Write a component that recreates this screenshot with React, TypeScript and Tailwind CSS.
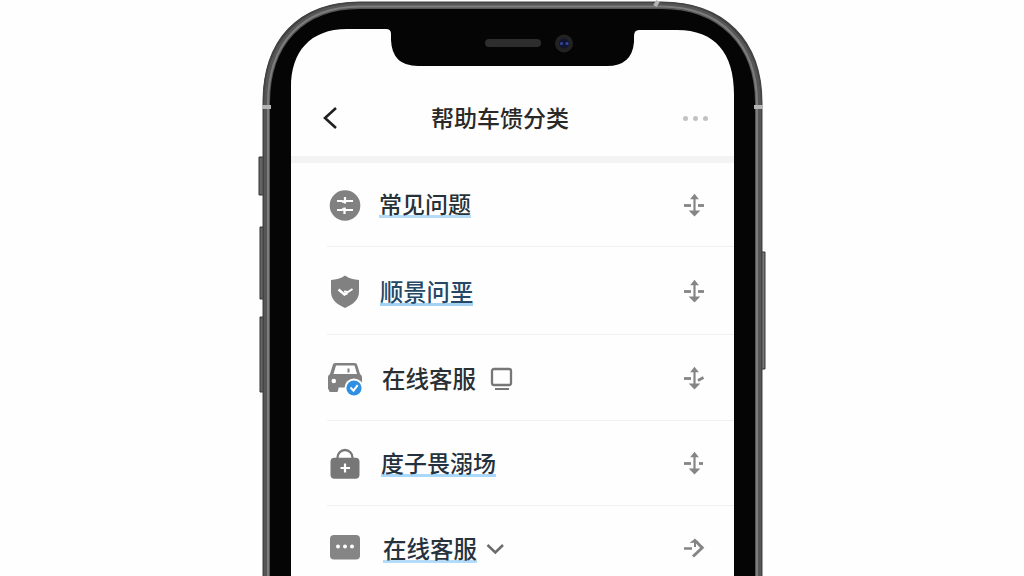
import React from 'react';

interface HelpRow {
  id: string;
  label: string;
  icon: React.ReactNode;
  arrow: React.ReactNode;
  extra?: React.ReactNode;
  labelClass: string;
  underline?: string;
  rowClass: string;
}

const MoveArrow = ({ right }: { right: string }) => (
  <svg className="h-6 w-6" viewBox="0 0 24 24" fill="none" stroke="#858585" strokeWidth="2.2">
    <path d="M12.500 4v17" />
    <path d="M8.100 6.200 12.500.8l4.400 5.400zM6.700 17.600h11.600l-5.800 6z" fill="#858585" stroke="none" />
    <path d="M2 12.500h7" strokeWidth="2.8" />
    <path d={right} strokeWidth="2.8" />
  </svg>
);

const TurnArrow = () => (
  <svg className="h-6 w-6" viewBox="0 0 24 24" fill="none" stroke="#858585" strokeWidth="2.5">
    <path d="M2 11.500h8" />
    <path d="M13 10V5" strokeWidth="2" />
    <path d="M7.500 6 13 1.500 17 5.500z" fill="#858585" stroke="none" />
    <path d="m14 4.500 6.200 6.300-9.200 8.700" strokeWidth="3" />
  </svg>
);

const SettingsIcon = () => (
  <svg className="h-9 w-9" viewBox="0 0 36 36" fill="none">
    <circle cx="18" cy="18.500" r="15.3" fill="#818181" />
    <path
      d="M10 14h5.500M18.500 14H26M10 23h5.500M18.500 23H26M18 10v6.500M17.500 20.500V27"
      stroke="#fff"
      strokeWidth="2.200"
    />
    <path d="M15 14.500h3M15 22.500h4" stroke="#fff" strokeWidth="2.500" />
  </svg>
);

const ShieldIcon = () => (
  <svg className="h-9 w-9" viewBox="0 0 36 36" fill="none">
    <path
      d="M18 2.500c4 3 9 4 14 4.600V19c0 7.500-6 12.500-14 16C10 31.500 4 26.500 4 19V7.100C9 6.500 14 5.500 18 2.500Z"
      fill="#818181"
    />
    <path d="m11.500 16.500 6 5 3-1.500" stroke="#fff" strokeWidth="2.500" />
    <path d="m17 18.500 4 .500 4.500-3" stroke="#fff" strokeWidth="2" />
  </svg>
);

const CarIcon = () => (
  <svg className="h-9 w-9" viewBox="0 0 36 36" fill="none">
    <path
      d="M8.5 3h19c1.6 0 2.4.9 2.8 2.2L33 14c1.3.7 2 2 2 3.5v12H1v-12c0-1.500.7-2.800 2-3.500L5.700 5.200C6.100 3.900 7 3 8.500 3Z"
      fill="#818181"
    />
    <path d="M2 25h9v5.500c0 .8-.5 1.500-1.500 1.500h-6C2.500 32 2 31.300 2 30.500Z" fill="#818181" />
    <path d="M9 5.500h18.500l2.500 8.500H6.500Z" fill="#fff" />
    <path d="M21.500 8.500v4" stroke="#818181" strokeWidth="2" />
    <circle cx="6.800" cy="21" r="2.300" fill="#fff" />
    <path d="M11.500 27.500h8v4h-8z" fill="#fff" />
    <circle cx="27" cy="28" r="9.500" fill="#fff" />
    <circle cx="27" cy="28" r="7.600" fill="#2f8fe2" />
    <path d="m23.500 27.500 3 3.200 4.200-5.500" stroke="#fff" strokeWidth="2" />
  </svg>
);

const BagIcon = () => (
  <svg className="h-9 w-9" viewBox="0 0 36 36" fill="none">
    <path d="M10.500 15v-2.500a7.500 7.500 0 0 1 15 0V15" stroke="#777" strokeWidth="2.300" />
    <rect x="3.500" y="12.800" width="29" height="21" rx="4" fill="#777" />
    <path d="M18 18.500v9M13.500 23h9.500" stroke="#fff" strokeWidth="2.200" />
  </svg>
);

const MessageIcon = () => (
  <svg className="h-9 w-9" viewBox="0 0 36 36">
    <rect x="3" y="4" width="30" height="24.500" rx="4" fill="#858585" />
    <circle cx="11" cy="15.500" r="2" fill="#fff" />
    <circle cx="18" cy="15.500" r="2" fill="#fff" />
    <circle cx="25" cy="15.500" r="2" fill="#fff" />
  </svg>
);

const MonitorIcon = () => (
  <svg className="ml-3.5 h-6 w-6" viewBox="0 0 24 24" fill="none" stroke="#777">
    <rect x="2" y="3" width="19" height="16" rx="2" strokeWidth="2.300" />
    <path d="M5 23h14" strokeWidth="2" />
  </svg>
);

const ChevronIcon = () => (
  <svg className="ml-2 h-5 w-5" viewBox="0 0 20 20" fill="none">
    <path d="m2.500 6 7.800 7.500L18 6" stroke="#6b6b6b" strokeWidth="2.500" />
  </svg>
);

const rows: HelpRow[] = [
  {
    id: 'faq',
    label: '常见问题',
    icon: <SettingsIcon />,
    arrow: <MoveArrow right="M16 12.500h6" />,
    labelClass: 'ml-4 mb-[3px] text-[#263238] text-[23px]',
    underline: 'bg-[#b4dcf8]',
    rowClass: 'h-[84px]',
  },
  {
    id: 'shield',
    label: '顺景问垩',
    icon: <ShieldIcon />,
    arrow: <MoveArrow right="M16 12.500h6" />,
    labelClass: 'ml-[17px] text-[#244866] text-[23.300px]',
    underline: 'bg-[#a5d2f2]',
    rowClass: 'h-[88px]',
  },
  {
    id: 'car',
    label: '在线客服',
    icon: <CarIcon />,
    arrow: <MoveArrow right="m16 14.500 5.500-3" />,
    extra: <MonitorIcon />,
    labelClass: 'ml-[19px] text-[#2a2f33] text-[23.500px]',
    rowClass: 'h-[86px]',
  },
  {
    id: 'bag',
    label: '度子畏溺场',
    icon: <BagIcon />,
    arrow: <MoveArrow right="M17 12.500h4" />,
    labelClass: 'ml-[18px] mb-0.5 text-[#24323f] text-[23px]',
    underline: 'bg-[#a9d8fa]',
    rowClass: 'h-[85px]',
  },
  {
    id: 'chat',
    label: '在线客服',
    icon: <MessageIcon />,
    arrow: <TurnArrow />,
    extra: <ChevronIcon />,
    labelClass: 'ml-5 mb-px text-[#26323c] text-[23.500px]',
    underline: 'bg-[#b4dcf8]',
    rowClass: 'h-[86px]',
  },
];

const Header = () => (
  <header className="mt-[61px] flex h-14 items-center pr-[25px] pl-7">
    <svg className="h-6 w-6" viewBox="0 0 24 24" fill="none">
      <path d="M17 2 6 12l11 10" stroke="#202020" strokeWidth="2.600" />
    </svg>
    <h1 className="flex-1 pr-6 pb-0.5 text-center text-[23px] leading-8 font-medium text-[#292929]">帮助车馈分类</h1>
    <div className="flex w-7 justify-center gap-[5px]">
      <span className="h-[5px] w-[5px] rounded-full bg-[#c2c2c2]" />
      <span className="h-[5px] w-[5px] rounded-full bg-[#c2c2c2]" />
      <span className="h-[5px] w-[5px] rounded-full bg-[#c2c2c2]" />
    </div>
  </header>
);

// Metal edge, bezel, notch and side keys
const PhoneFrame = () => (
  <svg className="pointer-events-none absolute inset-0 h-[576px] w-[512px]" viewBox="256 0 512 576" fill="none">
    <path d="M263 157h-4v38h4M264 227h-4v72h4M264 317h-4v75h4" fill="#656565" stroke="#353535" />
    <path d="M761 252h4v117h-4" fill="#777" stroke="#353535" />
    <path
      fillRule="evenodd"
      d="M263 590V103C263 40 298 2 360 2H661C724 2 762 40 762 103V590H734V94C734 53 715 30 677 30H639Q634 30 634 36V42Q632 66 607 66H418Q392 66 391 40V34Q391 29 386 29H347C310 29 291 52 291 87V590Z"
      fill="#050505"
    />
    <path d="M263.500 590V103C263.500 40.500 298.500 2.500 360 2.500H661C723.500 2.500 761.500 40.500 761.500 103V590" stroke="#444" strokeWidth="2" />
    <path d="M267 590V103C267 43.500 301.500 6 360 6H661C720.500 6 758 43.500 758 103V590" stroke="#565656" strokeWidth="6" />
    <path d="M268 590V103C268 44 302 6.500 360 6.500H661C720 6.500 757 44 757 103V590" stroke="#7d7d7d" strokeWidth="2" />
    <path d="M262 107h9M754 107h9M658 1l-3 5" stroke="#b5b5b5" strokeWidth="4" />
    <rect x="485" y="39" width="56" height="8" rx="4" fill="#2d2d2d" />
    <circle cx="564" cy="43.500" r="9" fill="#222" />
    <circle cx="564" cy="43.500" r="5" fill="#101532" />
    <circle cx="561.500" cy="43.500" r="1.500" fill="#3548a2" />
    <circle cx="567" cy="43.500" r="1.500" fill="#3548a2" />
  </svg>
);

const App: React.FC = () => {
  return (
    <div className="flex h-[576px] w-full justify-center overflow-hidden bg-[#fefefe] font-['Noto_Sans_CJK_SC',sans-serif]">
      <div className="relative w-[512px] shrink-0 pr-[34px] pl-[35px] pt-[29px]">
        <main className="h-[547px] overflow-hidden bg-[#fefefe]">
          <Header />
          <div className="mt-2.5 h-[7px] bg-[#f3f3f3]" />
          {rows.map((row) => (
            <section
              key={row.id}
              className={`ml-9 flex shrink-0 items-center border-b border-[#f1f1f1] pr-[28px] ${row.rowClass}`}
            >
              {row.icon}
              <span className={`relative leading-8 font-medium ${row.labelClass}`}>
                {row.underline && (
                  <span className={`absolute inset-x-0 bottom-px h-[3px] ${row.underline}`} />
                )}
                <span className="relative">{row.label}</span>
              </span>
              {row.extra}
              <span className="ml-auto">{row.arrow}</span>
            </section>
          ))}
        </main>
        <PhoneFrame />
      </div>
    </div>
  );
};

export default App;
